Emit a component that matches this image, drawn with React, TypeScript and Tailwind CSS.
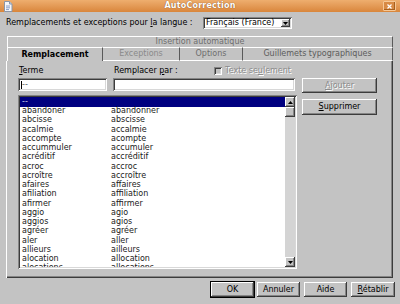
import React from "react";

const rows: [string, string][] = [
  ["abandoner", "abandonner"],
  ["abcisse", "abscisse"],
  ["acalmie", "accalmie"],
  ["accompte", "acompte"],
  ["accummuler", "accumuler"],
  ["acréditif", "accréditif"],
  ["acroc", "accroc"],
  ["acroître", "accroître"],
  ["afaires", "affaires"],
  ["afiliation", "affiliation"],
  ["afirmer", "affirmer"],
  ["aggio", "agio"],
  ["aggios", "agios"],
  ["agréer", "agréer"],
  ["aler", "aller"],
  ["allieurs", "ailleurs"],
  ["alocation", "allocation"],
  ["alocations", "allocations"],
];

const raised =
  "bg-[#c3c3c3] shadow-[inset_-1px_-1px_0_#3c3c3c,inset_1px_1px_0_#ffffff,inset_-2px_-2px_0_#858585]";
const sunken =
  "shadow-[inset_1px_1px_0_#858585,inset_-1px_-1px_0_#ffffff,inset_2px_2px_0_#3c3c3c,inset_-2px_-2px_0_#d8d8d8]";

function DocIcon() {
  return (
    <svg width="10" height="11" viewBox="0 0 10 11">
      <path d="M1.5 0.5h5l2.5 2.5v7.5h-7.5z" fill="#f4f6fa" stroke="#8a96a8" strokeWidth="1" />
      <path d="M6.5 0.5v2.5h2.5" fill="#d0d6e0" stroke="#8a96a8" strokeWidth="1" />
      <path d="M3 5h4M3 6.8h4M3 8.6h3" stroke="#6d86b8" strokeWidth="0.8" />
    </svg>
  );
}

function Arrow({ up }: { up?: boolean }) {
  return (
    <svg width="5" height="3" viewBox="0 0 5 3">
      <path d={up ? "M0 3h5L2.5 0z" : "M0 0h5L2.5 3z"} fill="#000" />
    </svg>
  );
}

function Button({
  label,
  w,
  disabled,
  def,
  h = "h-[15px]",
}: {
  label: React.ReactNode;
  w: string;
  disabled?: boolean;
  def?: boolean;
  h?: string;
}) {
  return (
    <div
      className={`${w} ${h} ${raised} flex items-center justify-center ${
        def ? "outline outline-1 outline-black" : ""
      } ${disabled ? "text-[#8c8c8c] [text-shadow:1px_1px_0_#ffffff]" : "text-black"}`}
    >
      {label}
    </div>
  );
}

export default function App() {
  return (
    <div className="w-[400px] h-[304px] overflow-hidden bg-[#c3c3c3] flex flex-col font-['DejaVu_Sans',sans-serif] text-[8px] leading-none text-black">
      {/* Title bar */}
      <div className="h-[12px] flex items-center bg-linear-to-b from-[#eeae6e] to-[#d9863b]">
        <div className="w-[22px] pl-[3px] flex items-center">
          <DocIcon />
        </div>
        <div className="flex-1 text-center font-bold text-white tracking-[0.2px] [text-shadow:0_0_1px_#6a3208]">
          AutoCorrection
        </div>
        <div className="w-[22px] flex justify-end pr-[4px]">
          <div className="w-[13px] h-[10px] rounded-[1px] border border-[#f6c896] bg-[#d88a44] flex items-center justify-center shadow-[inset_-1px_-1px_0_#a8601e]">
            <svg width="5" height="5" viewBox="0 0 5 5">
              <path d="M0.5 0.5l4 4M4.5 0.5l-4 4" stroke="#fff" strokeWidth="1.2" />
            </svg>
          </div>
        </div>
      </div>

      {/* Language row */}
      <div className="mt-[5px] h-[12px] flex items-center">
        <div className="w-[203px] pl-[6px]">
          Remplacements et exceptions pour <span className="underline">l</span>a langue :
        </div>
        <div className={`w-[89px] h-[12px] bg-white ${sunken} flex items-center pl-[3px] pr-[2px]`}>
          <span className="flex-1">Français (France)</span>
          <div className={`w-[9px] h-[8px] ${raised} flex items-center justify-center`}>
            <Arrow />
          </div>
        </div>
      </div>

      {/* Tabs */}
      <div className="mt-[7px] ml-[7px] w-[386px] h-[11px] border-t border-l border-white border-r border-r-[#5a5a5a] flex items-center justify-center text-[#6e6e6e]">
        Insertion automatique
      </div>
      <div className="ml-[7px] w-[386px] h-[14px] flex">
        <div className="w-[96px] border-t border-l border-white border-r border-r-[#5a5a5a] flex items-center justify-center font-bold">
          Remplacement
        </div>
        <div className="w-[77px] border-t border-white border-b border-r border-r-[#5a5a5a] flex items-center justify-center text-[#8a8a8a]">
          Exceptions
        </div>
        <div className="w-[63px] border-t border-white border-b border-r border-r-[#5a5a5a] flex items-center justify-center text-[#6e6e6e]">
          Options
        </div>
        <div className="w-[150px] border-t border-white border-b border-r border-r-[#5a5a5a] flex items-center justify-center text-[#5c5c5c]">
          Guillemets typographiques
        </div>
      </div>

      {/* Panel */}
      <div className="ml-[6px] w-[387px] h-[217px] border-l border-white shadow-[inset_-1px_-1px_0_#3c3c3c,inset_-2px_-2px_0_#858585] flex">
        <div className="pl-[11px] flex flex-col">
          <div className="mt-[5px] h-[10px] grid grid-cols-[89px_182px] gap-x-[6px] items-center">
            <div className="pl-[1px]">
              <span className="underline">T</span>erme
            </div>
            <div className="flex items-center pl-[1px] pr-[4px]">
              <span>
                Remplacer <span className="underline">p</span>ar :
              </span>
              <div className="ml-auto flex items-center gap-[3px] text-[#8c8c8c] [text-shadow:1px_1px_0_#ffffff]">
                <div className={`w-[8px] h-[8px] ${sunken} bg-[#c3c3c3]`} />
                <span>
                  Texte se<span className="underline">u</span>lement
                </span>
              </div>
            </div>
          </div>
          <div className="mt-[2px] h-[13px] grid grid-cols-[89px_182px] gap-x-[6px]">
            <div className={`bg-white ${sunken} flex items-center pl-[3px]`}>
              <span className="w-px h-[8px] bg-black" />
              <span className="text-[#555]">--</span>
            </div>
            <div className={`bg-white ${sunken}`} />
          </div>

          {/* List */}
          <div className={`mt-[4px] w-[279px] h-[174px] bg-white ${sunken} p-[2px] flex`}>
            <div className="flex-1 overflow-hidden">
              <div className="h-[9.5px] bg-[#000080] text-[#d0d0e8] flex items-center pl-[2px]">--</div>
              {rows.map(([a, b]) => (
                <div
                  key={a}
                  className="h-[9.25px] grid grid-cols-[89px_1fr] items-center pl-[2px] text-[#1a1a1a]"
                >
                  <span>{a}</span>
                  <span>{b}</span>
                </div>
              ))}
            </div>
            <div className="w-[10px] flex flex-col bg-[#d4d4d4]">
              <div className={`h-[10px] ${raised} flex items-center justify-center`}>
                <Arrow up />
              </div>
              <div className={`h-[10px] ${raised}`} />
              <div className="flex-1" />
              <div className={`h-[10px] ${raised} flex items-center justify-center`}>
                <Arrow />
              </div>
            </div>
          </div>
        </div>

        {/* Side buttons */}
        <div className="ml-[5px] pt-[17px] flex flex-col gap-[6px]">
          <Button
            w="w-[75px]"
            disabled
            label={
              <span>
                <span className="underline">A</span>jouter
              </span>
            }
          />
          <Button
            w="w-[75px]"
            h="h-[16px]"
            label={
              <span>
                <span className="underline">S</span>upprimer
              </span>
            }
          />
        </div>
      </div>

      {/* Bottom buttons */}
      <div className="mt-[4px] h-[15px] flex justify-end pr-[5px]">
        <Button w="w-[43px]" def label="OK" />
        <div className="w-[3px]" />
        <Button w="w-[43px]" label="Annuler" />
        <div className="w-[4px]" />
        <Button w="w-[43px]" label="Aide" />
        <div className="w-[4px]" />
        <Button
          w="w-[44px]"
          label={
            <span>
              <span className="underline">R</span>établir
            </span>
          }
        />
      </div>
    </div>
  );
}
